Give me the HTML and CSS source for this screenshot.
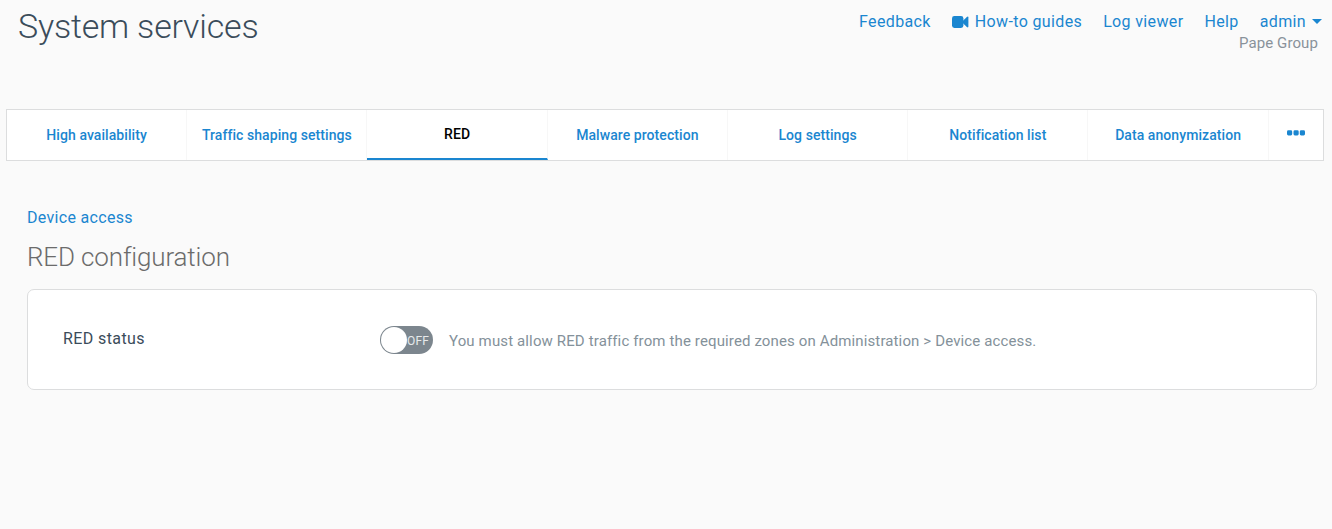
FILE: index.html
```html
<!DOCTYPE html>
<html lang="en">
<head>
    <meta charset="UTF-8">
    <meta name="viewport" content="width=device-width, initial-scale=1.0">
    <title>System services</title>
    <link rel="stylesheet" href="styles.css">
</head>
<body>
    <header class="page-header">
        <h1>System services</h1>
        <div class="user-area">
            <nav class="top-links">
                <a href="#">Feedback</a>
                <a href="#">
                    <svg class="icon-video" width="17" height="12" viewBox="0 0 17 12">
                        <rect x="0" y="0" width="11.4" height="12" rx="2.4"/>
                        <path d="M11 4.8L14.8 1Q16.4 0 16.4 1.4V10.6Q16.4 12 14.8 11L11 7.2Z"/>
                    </svg>
                    <span>How-to guides</span>
                </a>
                <a href="#">Log viewer</a>
                <a href="#">Help</a>
                <a href="#"><span>admin</span><span class="caret"></span></a>
            </nav>
            <div class="company">Pape Group</div>
        </div>
    </header>

    <nav class="tabs">
        <a href="#" class="tab">High availability</a>
        <a href="#" class="tab">Traffic shaping settings</a>
        <a href="#" class="tab active">RED</a>
        <a href="#" class="tab">Malware protection</a>
        <a href="#" class="tab">Log settings</a>
        <a href="#" class="tab">Notification list</a>
        <a href="#" class="tab">Data anonymization</a>
        <a href="#" class="tab more" aria-label="More">
            <svg width="18" height="6" viewBox="0 0 18 6">
                <rect x="0" y="0.3" width="5.2" height="5.2" rx="1.4"/>
                <rect x="6.5" y="0.3" width="5.2" height="5.2" rx="1.4"/>
                <rect x="12.8" y="0.3" width="5.2" height="5.2" rx="1.4"/>
            </svg>
        </a>
    </nav>

    <main class="content">
        <a href="#" class="device-link">Device access</a>
        <h2>RED configuration</h2>
        <div class="panel">
            <div class="label">RED status</div>
            <div class="toggle" role="switch" aria-checked="false">
                <span class="knob"></span>
                <span class="state">OFF</span>
            </div>
            <div class="hint">You must allow RED traffic from the required zones on Administration &gt; Device access.</div>
        </div>
    </main>
</body>
</html>
```
FILE: styles.css
```css
* {
    box-sizing: border-box;
}
body {
    margin: 0;
    background: #fafafa;
    color: #3b4c5a;
    font-family: Roboto, "Liberation Sans", sans-serif;
    font-size: 16px;
}
a {
    color: #1a86d0;
    text-decoration: none;
    white-space: nowrap;
}
svg {
    fill: #1a86d0;
    flex: none;
}
.page-header {
    display: flex;
    justify-content: space-between;
    height: 109px;
    padding: 0 10px 0 18px;
}
h1 {
    margin: 6px 0 0;
    font-size: 34px;
    font-weight: 300;
    line-height: 40px;
    letter-spacing: -0.2px;
}
.user-area {
    padding-top: 12px;
}
.top-links {
    display: flex;
    line-height: 20px;
    letter-spacing: 0.36px;
}
.top-links a {
    display: flex;
    align-items: center;
    margin-left: 21px;
}
.icon-video {
    margin-right: 6px;
}
.caret {
    margin: 0 0 1px 6px;
    border: 5px solid transparent;
    border-top-color: #1a86d0;
    border-bottom: 0;
}
.company {
    padding-right: 4px;
    color: #89929a;
    font-size: 15px;
    line-height: 22px;
    letter-spacing: 0.1px;
    text-align: right;
}
.tabs {
    display: grid;
    grid-template-columns: repeat(7, 1fr) 54.3px;
    height: 52px;
    margin: 0 8px 0 6px;
    background: #fff;
    border: 1px solid #dcddde;
}
.tab {
    display: flex;
    align-items: center;
    justify-content: center;
    border-right: 1px solid #f7f7f7;
    font-size: 14px;
    font-weight: 500;
    letter-spacing: 0.07px;
}
.tab.active {
    border-bottom: 2px solid #1a86d0;
    color: #000;
}
.tab.more {
    padding-bottom: 4px;
    border-right: 0;
}
.content {
    padding: 47px 15px 0 27px;
}
.device-link {
    display: block;
    line-height: 20px;
    letter-spacing: 0.31px;
}
h2 {
    margin: 14px 0 17px;
    color: #6b6b6b;
    font-size: 26px;
    font-weight: 300;
    line-height: 30px;
    letter-spacing: -0.15px;
}
.panel {
    display: flex;
    height: 101px;
    padding: 0 35px;
    background: #fff;
    border: 1px solid #dcddde;
    border-radius: 7px;
}
.label {
    width: 317px;
    padding-top: 39px;
    line-height: 20px;
    letter-spacing: 0.4px;
}
.toggle {
    display: flex;
    align-items: center;
    width: 53px;
    height: 28px;
    margin-top: 36px;
    padding: 1px;
    background: #7c868e;
    border-radius: 14px;
}
.knob {
    width: 26px;
    height: 26px;
    background: #fff;
    border-radius: 50%;
}
.state {
    padding-top: 1px;
    color: #e6e9eb;
    font-size: 12px;
    letter-spacing: 0.2px;
}
.hint {
    margin: 41px 0 0 16px;
    color: #84919a;
    font-size: 15px;
    line-height: 20px;
    letter-spacing: 0.13px;
    white-space: nowrap;
}
```
